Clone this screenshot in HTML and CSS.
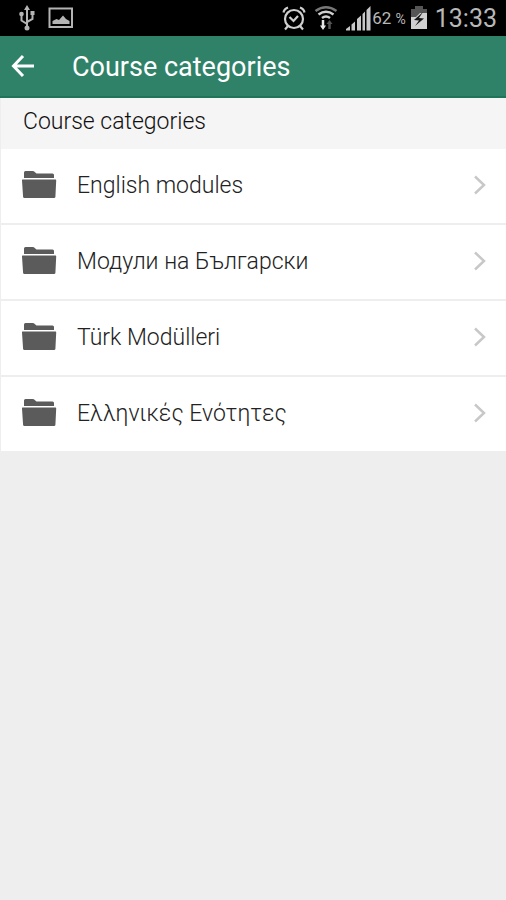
FILE: index.html
```html
<!DOCTYPE html>
<html lang="en">
<head>
<meta charset="utf-8">
<meta name="viewport" content="width=device-width, initial-scale=1">
<title>Course categories</title>
<link rel="stylesheet" href="styles.css">
</head>
<body>
<svg class="sprite" aria-hidden="true">
  <symbol id="folder" viewBox="0 0 36 30">
    <path d="M3 8V2.500Q3 1 4.500 1H11.500Q13 1 14 2.200L15.500 3.500H31.500Q33 3.500 33 5V8Z" fill="#5b5b5b"/>
    <path d="M1.500 9.500H34.500Q35.300 9.500 35.200 10.500L34.400 27Q34.300 28 33 28H3.500Q2.200 28 2.100 27L1 10.500Q.900 9.500 1.500 9.500Z" fill="#5b5b5b"/>
  </symbol>
  <symbol id="chevron" viewBox="0 0 14 20">
    <path d="M2 1.500L11 10L2 18.500" fill="none" stroke="#c8c8c8" stroke-width="2.500"/>
  </symbol>
</svg>
<div class="status">
  <div class="status-group notices">
    <svg width="18" height="26" viewBox="0 0 18 26" fill="none" stroke="#b4b4b4" stroke-width="2">
      <path d="M9 4V22M9 19L3.500 15.500V10M9 17L14.500 14V9"/>
      <path d="M9 0L12 5H6Z" fill="#b4b4b4" stroke="none"/>
      <circle cx="9" cy="23" r="2.500" fill="#b4b4b4" stroke="none"/>
      <circle cx="3.500" cy="9" r="2.300" fill="#b4b4b4" stroke="none"/>
      <path d="M12.500 6H16.500V10H12.500Z" fill="#b4b4b4" stroke="none"/>
    </svg>
    <svg width="26" height="22" viewBox="0 0 26 22">
      <rect x="1.500" y="1.500" width="22.500" height="18.500" fill="none" stroke="#b4b4b4" stroke-width="2"/>
      <path d="M4.500 17V14L8.500 12L11 13L15 8.500L18 12L21.500 14V17Z" fill="#b4b4b4"/>
    </svg>
  </div>
  <div class="status-group">
    <svg width="24" height="26" viewBox="0 0 24 26" fill="none" stroke="#d0d0d0" stroke-width="2.200">
      <circle cx="12" cy="14" r="9"/>
      <path d="M7.500 12L11.500 16L16 11M1.500 7.500Q2 4 6 2.500M22.500 7.500Q22 4 18 2.500M6 21L3 24.500M18 21L21 24.500"/>
    </svg>
    <svg class="wifi" width="24" height="26" viewBox="0 0 24 26" fill="none" stroke-width="2.500">
      <path d="M1.500 6Q12-1.500 22.500 6" stroke="#777"/>
      <path d="M4.500 9.500Q12 4 19.500 9.500M8 13Q12 10 16 13" stroke="#d0d0d0"/>
      <path d="M9 15V23" stroke="#e8e8e8"/>
      <path d="M6 20.500H12L9 25Z" fill="#e8e8e8"/>
      <path d="M15.500 24V18" stroke="#555"/>
      <path d="M12.500 19H18.500L15.500 15Z" fill="#555"/>
    </svg>
    <svg width="25" height="25" viewBox="0 0 25 25" fill="#c8c8c8">
      <path d="M0 24.500V23L4 20V24.500ZM5.500 24.500V18.500L9 15.500V24.500ZM11 24.500V13L15 9.500V24.500ZM16.500 24.500V8L19 5.500V24.500ZM20.500 24.500V4L24.500 0V24.500Z"/>
    </svg>
    <span class="percent">62 <small>%</small></span>
    <svg class="battery" width="16" height="24" viewBox="0 0 16 24">
      <path d="M0 3H4V0H12V3H16V12H0Z" fill="#555"/>
      <path d="M0 11H5L9 7H16V23H0Z" fill="#d0d0d0"/>
      <path d="M12 6L3 14L8 14.500L4 20L13 12.500L8 12Z" fill="#161616"/>
    </svg>
    <time class="clock">13:33</time>
  </div>
</div>
<header class="bar">
  <button class="back" aria-label="Back">
    <svg width="24" height="24" viewBox="0 0 24 24" fill="none" stroke="#fff" stroke-width="3"><path d="M12 2L2.500 12L12 22M2.500 12H23"/></svg>
  </button>
  <h1>Course categories</h1>
</header>
<main>
  <h2>Course categories</h2>
  <nav aria-label="Course categories">
    <a href="#english"><svg class="folder"><use href="#folder"/></svg><span>English modules</span><svg class="chevron"><use href="#chevron"/></svg></a>
    <a href="#bulgarian" lang="bg"><svg class="folder"><use href="#folder"/></svg><span>Модули на Български</span><svg class="chevron"><use href="#chevron"/></svg></a>
    <a href="#turkish" lang="tr"><svg class="folder"><use href="#folder"/></svg><span>Türk Modülleri</span><svg class="chevron"><use href="#chevron"/></svg></a>
    <a href="#greek" lang="el"><svg class="folder"><use href="#folder"/></svg><span>Ελληνικές Ενότητες</span><svg class="chevron"><use href="#chevron"/></svg></a>
  </nav>
</main>
</body>
</html>
```
FILE: styles.css
```css
* { box-sizing: border-box; }
body {
  margin: 0;
  min-height: 100vh;
  background: #eee;
  color: #222;
  font-family: Roboto, "Liberation Sans", sans-serif;
}
.sprite { position: absolute; width: 0; height: 0; }
svg { flex: none; }
.status {
  display: flex;
  justify-content: space-between;
  align-items: center;
  height: 36px;
  padding: 0 9px 0 18px;
  background: #000;
  color: #b8b8b8;
}
.status-group { display: flex; align-items: center; }
.notices { gap: 12px; }
.wifi { margin: 0 8px; }
.percent { margin-left: 1px; font-size: 17px; }
.percent small { font-size: 14px; }
.battery { margin: 0 8px 0 5px; }
.clock { padding-top: 2px; font-size: 25px; line-height: 34px; }
.bar {
  display: flex;
  align-items: center;
  height: 62px;
  padding: 0 11px;
  gap: 37px;
  background: #2f8268;
  border-bottom: 2px solid #1f7559;
  color: #fff;
}
.back {
  display: flex;
  padding: 0;
  border: 0;
  background: none;
}
h1, h2 { margin: 0; font-weight: 400; }
h1 { padding-top: 2px; font-size: 27px; line-height: 34px; }
main { border-left: 1px solid #eee; }
h2 {
  padding: 9px 22px 12px;
  background: #f5f5f5;
  color: #111;
  font-size: 23px;
  font-weight: 300;
  line-height: 30px;
}
nav a {
  display: flex;
  align-items: center;
  height: 76px;
  padding: 0 19px 2px 20px;
  background: #fff;
  border-bottom: 2px solid #eee;
  color: inherit;
  font-size: 23px;
  font-weight: 300;
  line-height: 32px;
  text-decoration: none;
}
nav span { flex: 1; margin-left: 20px; padding-top: 2px; }
.folder { width: 36px; height: 30px; }
.chevron { width: 14px; height: 20px; }
```
